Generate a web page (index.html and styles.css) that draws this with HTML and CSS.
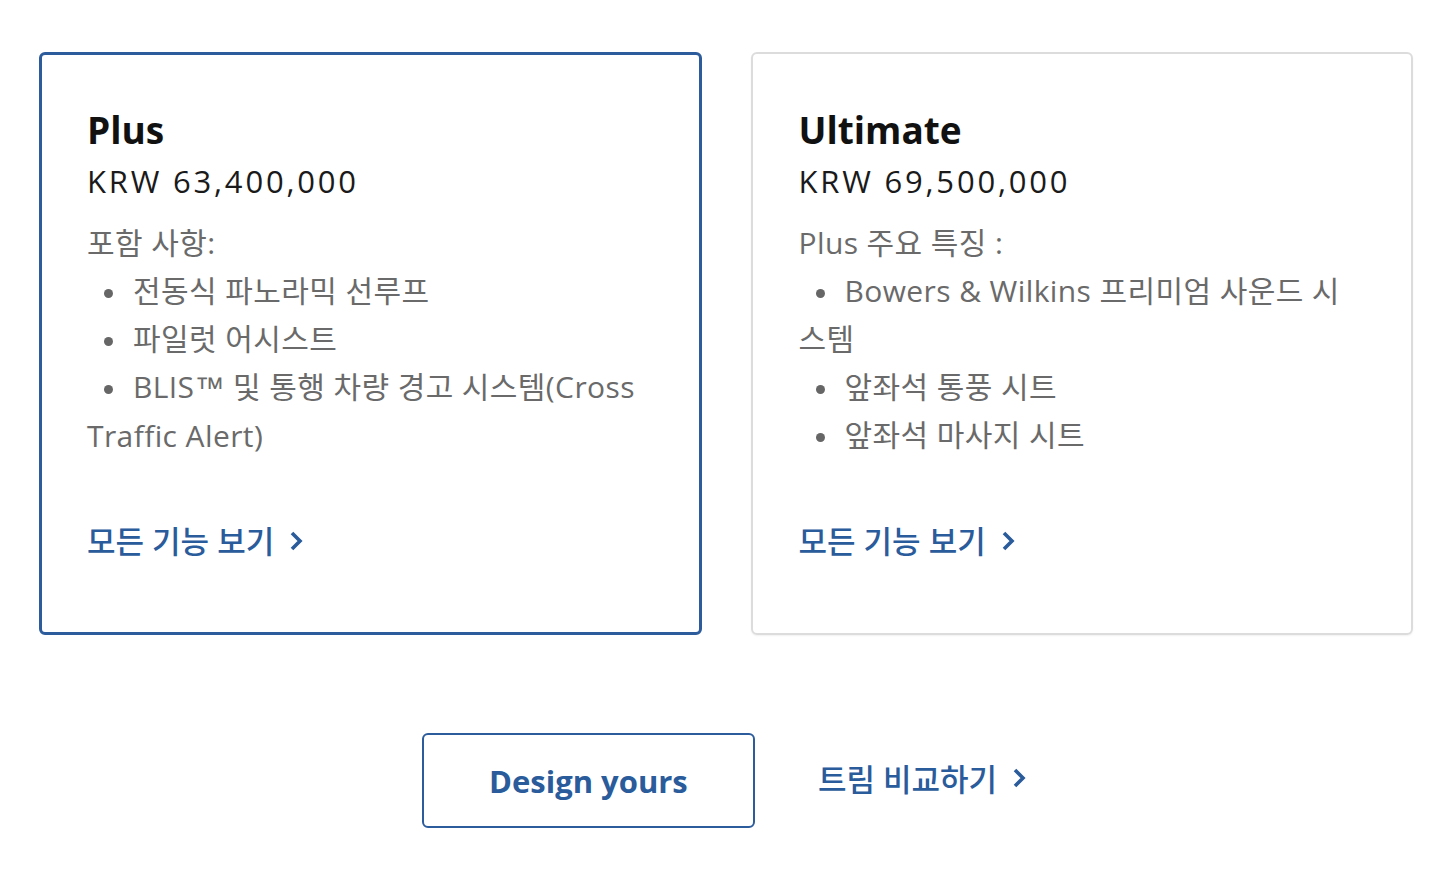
FILE: index.html
```html
<!DOCTYPE html>
<html lang="ko">
<head>
    <meta charset="UTF-8">
    <meta name="viewport" content="width=device-width, initial-scale=1.0">
    <title>트림 선택</title>
    <link rel="stylesheet" href="styles.css">
</head>
<body>
    <div class="trims">
        <div class="trim-card selected">
            <h2 class="trim-name">Plus</h2>
            <p class="trim-price">KRW 63,400,000</p>
            <p class="trim-intro">포함 사항:</p>
            <ul class="trim-features">
                <li>전동식 파노라믹 선루프</li>
                <li>파일럿 어시스트</li>
                <li>BLIS<span class="tm">™</span> 및 통행 차량 경고 시스템(Cross Traffic Alert)</li>
            </ul>
            <a class="more-link" href="#">모든 기능 보기
                <svg class="chevron" viewBox="0 0 14 22" width="14" height="22"><path d="M3 3 L11 11 L3 19" fill="none" stroke="currentColor" stroke-width="3.6"/></svg>
            </a>
        </div>

        <div class="trim-card">
            <h2 class="trim-name">Ultimate</h2>
            <p class="trim-price">KRW 69,500,000</p>
            <p class="trim-intro">Plus 주요 특징 :</p>
            <ul class="trim-features">
                <li>Bowers &amp; Wilkins 프리미엄 사운드 시스템</li>
                <li>앞좌석 통풍 시트</li>
                <li>앞좌석 마사지 시트</li>
            </ul>
            <a class="more-link" href="#">모든 기능 보기
                <svg class="chevron" viewBox="0 0 14 22" width="14" height="22"><path d="M3 3 L11 11 L3 19" fill="none" stroke="currentColor" stroke-width="3.6"/></svg>
            </a>
        </div>
    </div>

    <div class="actions">
        <a class="design-button" href="#">Design yours</a>
        <a class="compare-link" href="#">트림 비교하기
            <svg class="chevron" viewBox="0 0 14 22" width="14" height="22"><path d="M3 3 L11 11 L3 19" fill="none" stroke="currentColor" stroke-width="3.6"/></svg>
        </a>
    </div>
</body>
</html>
```

FILE: styles.css
```css
body {
    font-family: "Open Sans", "Noto Sans CJK KR", sans-serif;
    background-color: #fff;
    color: #141414;
    margin: 0;
    padding: 0;
}
.trims {
    display: grid;
    grid-template-columns: 1fr 1fr;
    gap: 49px;
    padding: 52px 35px 0 39px;
}
.trim-card {
    display: flex;
    flex-direction: column;
    align-items: flex-start;
    border: 2px solid #dcdcdc;
    border-radius: 6px;
    padding: 50px 46px 68px;
    box-shadow: 0 1px 2px rgba(0, 0, 0, 0.06);
}
.trim-card.selected {
    border: 3px solid #2d5c9c;
    padding: 49px 45px 67px;
    box-shadow: none;
}
.trim-name {
    font-size: 37px;
    font-weight: 700;
    line-height: 52px;
    margin: 0;
    color: #111;
}
.trim-price {
    font-size: 31px;
    line-height: 50px;
    margin: 0;
    letter-spacing: 2.8px;
    color: #1a1a1a;
}
.trim-intro,
.trim-features {
    font-size: 30px;
    line-height: 48px;
    font-weight: 400;
    letter-spacing: 0.4px;
    color: #6a6a6a;
}
.trim-intro {
    margin: 13px 0 0;
}
.trim-features {
    list-style: none;
    margin: 0;
    padding: 0;
}
.trim-features li {
    text-indent: 17px;
}
.trim-features li::before {
    content: "";
    display: inline-block;
    width: 9px;
    height: 9px;
    border-radius: 50%;
    background-color: #666;
    margin-right: 20px;
    vertical-align: middle;
}
.tm {
    font-family: "Liberation Sans", sans-serif;
    font-size: 30px;
}
.more-link {
    display: inline-flex;
    align-items: center;
    gap: 15px;
    margin-top: auto;
    padding-top: 57px;
    font-size: 31px;
    line-height: 48px;
    font-weight: 500;
    color: #2a5b9b;
    text-decoration: none;
}
.chevron {
    display: block;
}
.actions {
    display: flex;
    justify-content: center;
    align-items: center;
    gap: 63px;
    padding-top: 98px;
}
.design-button {
    width: 333px;
    height: 95px;
    box-sizing: border-box;
    border: 2px solid #2d5c9c;
    border-radius: 6px;
    display: flex;
    align-items: center;
    justify-content: center;
    font-size: 31px;
    font-weight: 700;
    color: #2a5b9b;
    text-decoration: none;
}
.compare-link {
    display: inline-flex;
    align-items: center;
    gap: 15px;
    font-size: 31px;
    font-weight: 500;
    color: #2a5b9b;
    text-decoration: none;
    margin-top: -6px;
}
```
